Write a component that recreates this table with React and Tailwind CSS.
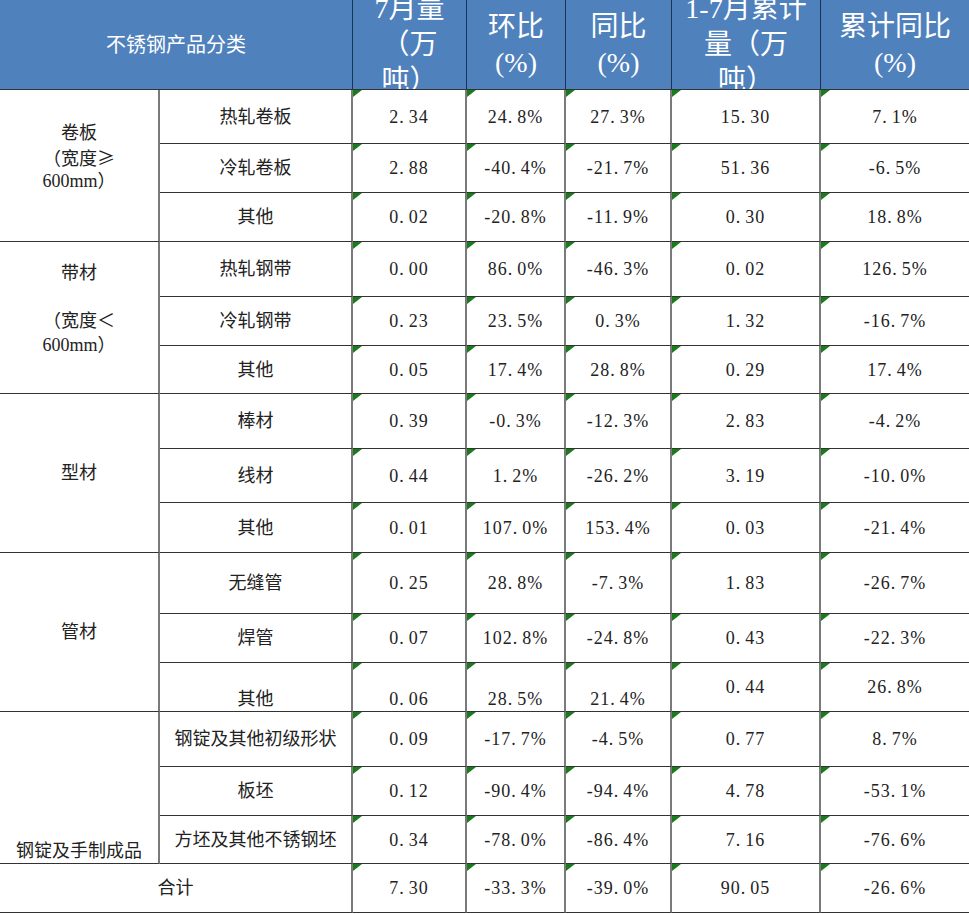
import clsx from "clsx";

const groups = [
  {
    label: ["卷板", "（宽度≥", "600mm）"],
    shift: true,
    rows: [
      ["热轧卷板", "2.34", "24.8%", "27.3%", "15.30", "7.1%"],
      ["冷轧卷板", "2.88", "-40.4%", "-21.7%", "51.36", "-6.5%"],
      ["其他", "0.02", "-20.8%", "-11.9%", "0.30", "18.8%"],
    ],
  },
  {
    label: ["带材", "", "（宽度＜", "600mm）"],
    shift: true,
    rows: [
      ["热轧钢带", "0.00", "86.0%", "-46.3%", "0.02", "126.5%"],
      ["冷轧钢带", "0.23", "23.5%", "0.3%", "1.32", "-16.7%"],
      ["其他", "0.05", "17.4%", "28.8%", "0.29", "17.4%"],
    ],
  },
  {
    label: ["型材"],
    rows: [
      ["棒材", "0.39", "-0.3%", "-12.3%", "2.83", "-4.2%"],
      ["线材", "0.44", "1.2%", "-26.2%", "3.19", "-10.0%"],
      ["其他", "0.01", "107.0%", "153.4%", "0.03", "-21.4%"],
    ],
  },
  {
    label: ["管材"],
    rows: [
      ["无缝管", "0.25", "28.8%", "-7.3%", "1.83", "-26.7%"],
      ["焊管", "0.07", "102.8%", "-24.8%", "0.43", "-22.3%"],
      // first four cells of this row sit on the bottom edge
      ["其他", "0.06", "28.5%", "21.4%", "0.44", "26.8%", 4],
    ],
  },
  {
    label: ["钢锭及手制成品"],
    bottom: true,
    rows: [
      ["钢锭及其他初级形状", "0.09", "-17.7%", "-4.5%", "0.77", "8.7%"],
      ["板坯", "0.12", "-90.4%", "-94.4%", "4.78", "-53.1%"],
      ["方坯及其他不锈钢坯", "0.34", "-78.0%", "-86.4%", "7.16", "-76.6%"],
    ],
  },
];

const total = ["7.30", "-33.3%", "-39.0%", "90.05", "-26.6%"];

const heads = [
  ["7月量", "（万", "吨）"],
  ["环比", "(%)"],
  ["同比", "(%)"],
  ["1-7月累计", "量（万", "吨）"],
  ["累计同比", "(%)"],
];

function Flag() {
  return (
    <svg className="absolute left-0 top-0" width="9" height="7" viewBox="0 0 9 7">
      <polygon points="0,0 9,0 0,7" fill="#1b7a1b" />
    </svg>
  );
}

function Num({ v }) {
  const i = v.indexOf(".");
  if (i < 0) return v;
  return (
    <>
      {v.slice(0, i)}
      <span className="mr-[4px]">.</span>
      {v.slice(i + 1)}
    </>
  );
}

// the ≥ sign is drawn full width in the sheet, so take it from the CJK font
function Label({ text }) {
  const i = text.indexOf("≥");
  if (i < 0) return text;
  return (
    <>
      {text.slice(0, i)}
      <span className="font-['Noto_Sans_CJK_SC',sans-serif]">≥</span>
      {text.slice(i + 1)}
    </>
  );
}

function NumCell({ v, bottom, last }) {
  return (
    <div
      className={clsx(
        "relative flex justify-center border-b border-b-[#333] text-[18px] tracking-[1px]",
        bottom ? "items-end" : "items-center",
        !last && "border-r-2 border-r-[#7a7a7a]"
      )}
    >
      <Flag />
      <span className="leading-6 whitespace-nowrap">
        <Num v={v} />
      </span>
    </div>
  );
}

function NameCell({ text, bottom }) {
  return (
    <div
      className={clsx(
        "flex justify-center border-b border-b-[#333] border-r-2 border-r-[#7a7a7a] text-[18px]",
        bottom ? "items-end" : "items-center"
      )}
    >
      <span className="leading-6 whitespace-nowrap">{text}</span>
    </div>
  );
}

export default function App() {
  return (
    <div className="min-h-screen bg-white font-['Liberation_Serif','Noto_Sans_CJK_SC',serif] text-[#222]">
      <div className="grid w-[969px] grid-cols-[160px_193px_114px_99px_106px_149px_148px] grid-rows-[90px_54px_49px_49px_55px_49px_48px_55px_54px_50px_61px_49px_49px_55px_49px_48px_49px]">
        {/* header */}
        <div className="col-span-2 flex items-center justify-center border-b border-b-[#333] border-r border-r-[#1c3358] bg-[#4f81bd] text-[20px] text-white">
          不锈钢产品分类
        </div>
        {heads.map((lines, i) => (
          <div
            key={i}
            className={clsx(
              "flex flex-col items-center justify-center overflow-hidden border-b border-b-[#333] bg-[#4f81bd] text-[28px] leading-[36px] text-white",
              i < heads.length - 1 && "border-r border-r-[#1c3358]"
            )}
          >
            {lines.map((l, j) => (
              <div key={j} className="whitespace-nowrap">
                {l}
              </div>
            ))}
          </div>
        ))}

        {/* body */}
        {groups.map((g, gi) => (
          <div key={gi} className="contents">
            <div
              className={clsx(
                "row-span-3 flex flex-col items-center border-b border-b-[#333] border-r-2 border-r-[#7a7a7a] text-[18px] leading-6",
                g.bottom ? "justify-end" : "justify-center",
                g.shift && "pb-[18px]"
              )}
            >
              {g.label.map((l, j) => (
                <div key={j} className="h-6 whitespace-nowrap">
                  <Label text={l} />
                </div>
              ))}
            </div>
            {g.rows.map((r, ri) => {
              const low = r[6] || 0;
              return (
                <div key={ri} className="contents">
                  <NameCell text={r[0]} bottom={low > 0} />
                  {r.slice(1, 6).map((v, k) => (
                    <NumCell key={k} v={v} bottom={k + 1 < low} last={k === 4} />
                  ))}
                </div>
              );
            })}
          </div>
        ))}

        {/* total */}
        <div className="col-span-2 flex items-center justify-center border-b border-b-[#333] border-r-2 border-r-[#7a7a7a] text-[18px]">
          合计
        </div>
        {total.map((v, k) => (
          <NumCell key={k} v={v} last={k === 4} />
        ))}
      </div>
    </div>
  );
}
